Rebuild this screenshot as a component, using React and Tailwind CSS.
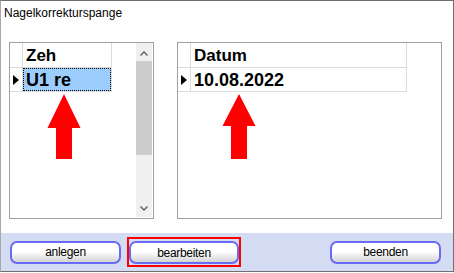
import React from "react";

const RowMarker = () => (
  <svg width="6" height="10" viewBox="0 0 6 10" className="absolute left-[3px] top-[7px]">
    <polygon points="0,0 6,5 0,10" fill="#000" />
  </svg>
);

const Arrow = ({ className, head }) => (
  <svg width="34" height="66" viewBox="0 0 34 66" className={"absolute " + className}>
    <polygon
      points={`17,0 33.5,${head} 25,${head} 25,65 9,65 9,${head} 0.5,${head}`}
      fill="#ff0000"
    />
  </svg>
);

const Button = ({ label, className = "w-[111px]" }) => (
  <button
    className={
      "h-[23px] rounded-[7px] border-2 border-[#6a6af8] bg-linear-to-b from-white from-45% to-[#d4d4d4] text-[12px] tracking-[-0.3px] text-black leading-none " +
      className
    }
  >
    {label}
  </button>
);

const GridPanel = ({ header, value, colWidth, selected, className, children }) => (
  <div className={"h-[177px] border border-[#a0a0a0] bg-white flex " + className}>
    <div className="flex flex-col flex-1">
      <div className="flex h-[25px] border-b border-[#dcdcdc] w-fit">
        <div className="w-[13px] border-r border-[#dcdcdc]" />
        <div
          className="border-r border-[#dcdcdc] pl-[3px] pt-[3px] text-[17px] font-bold leading-[20px]"
          style={{ width: colWidth }}
        >
          {header}
        </div>
      </div>
      <div className="flex h-[24px] border-b border-[#dcdcdc] w-fit">
        <div className="relative w-[13px] border-r border-[#dcdcdc]">
          <RowMarker />
        </div>
        <div className="border-r border-[#dcdcdc]" style={{ width: colWidth }}>
          {selected ? (
            <div className="h-full w-full border border-dotted border-black bg-[#9ccdfc] pl-[2px] pt-px text-[18px] font-bold leading-[20px]">
              {value}
            </div>
          ) : (
            <div className="h-full pl-[3px] pt-[2px] text-[18px] font-bold leading-[20px]">
              {value}
            </div>
          )}
        </div>
      </div>
    </div>
    {children}
  </div>
);

const Scrollbar = () => (
  <div className="w-[16px] h-[174px] mr-px bg-[#f0f0f0] flex flex-col">
    <div className="h-[17px] flex items-center justify-center pt-[3px]">
      <svg width="8" height="5" viewBox="0 0 8 5">
        <polyline points="0.5,4.5 4,1 7.5,4.5" fill="none" stroke="#606060" strokeWidth="1.4" />
      </svg>
    </div>
    <div className="h-[94px] mt-px bg-[#cdcdcd]" />
    <div className="flex-1" />
    <div className="h-[17px] flex items-center justify-center">
      <svg width="8" height="5" viewBox="0 0 8 5">
        <polyline points="0.5,0.5 4,4 7.5,0.5" fill="none" stroke="#606060" strokeWidth="1.4" />
      </svg>
    </div>
  </div>
);

export default function App() {
  return (
    <div className="relative w-[454px] h-[272px] bg-white border-t border-r border-b border-[#707070] border-l border-l-[#a8a8a8] flex flex-col font-['Liberation_Sans',Arial,sans-serif] text-black">
      <div className="h-[41px] pl-[3px] pt-[5px] text-[12px] leading-[14px]">
        Nagelkorrekturspange
      </div>

      <div className="flex pl-[8px]">
        <GridPanel header="Zeh" value="U1 re" colWidth={89} selected className="w-[145px]">
          <Scrollbar />
        </GridPanel>
        <GridPanel header="Datum" value="10.08.2022" colWidth={216} className="w-[265px] ml-[23px]" />
      </div>

      <div className="mt-[14px] flex-1 bg-[#d4dcf4] flex items-center pl-[9px] pr-[12px]">
        <Button label="anlegen" />
        <div className="ml-[6px] border-2 border-[#ff0000] pt-[2px] pb-px flex">
          <Button label="bearbeiten" className="w-[110px]" />
        </div>
        <Button label="beenden" className="w-[111px] ml-auto" />
      </div>

      <Arrow className="left-[46px] top-[93px]" head={34} />
      <Arrow className="left-[221px] top-[93px]" head={32} />
    </div>
  );
}
